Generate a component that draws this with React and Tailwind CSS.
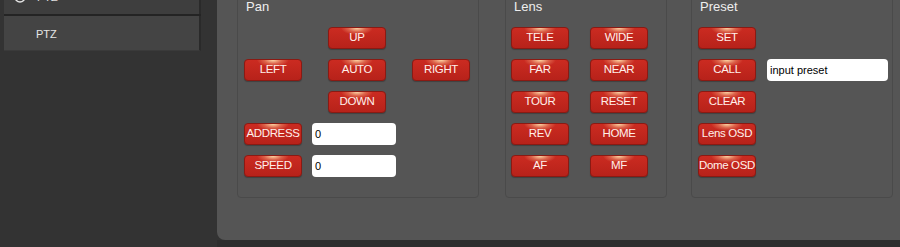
import React from "react";

const btnCls =
  "w-[58px] h-[22px] shrink-0 rounded-[4px] border border-[#8a1a13] text-[11.5px] tracking-[-0.35px] text-[#fff0ea] leading-none flex items-center justify-center bg-[#c2261d] bg-[image:radial-gradient(ellipse_16px_7px_at_50%_0%,rgba(255,222,170,0.95)_0%,rgba(255,200,150,0.35)_55%,rgba(255,200,150,0)_100%),linear-gradient(#cb2b21,#b7221a)] shadow-[0_1px_1px_rgba(0,0,0,0.25)]";

function Btn({ children, className = "" }) {
  return <div className={btnCls + " " + className}>{children}</div>;
}

function Input({ value, className = "" }) {
  return (
    <div
      className={
        "h-[22px] bg-white rounded-[4px] text-[11px] text-black flex items-center pl-[3px] " +
        className
      }
    >
      {value}
    </div>
  );
}

function Group({ title, className = "", children }) {
  return (
    <div
      className={
        "border border-[#4a4a4a] rounded-[4px] mt-[-14px] h-[212px] flex flex-col " +
        className
      }
    >
      <div className="text-[13px] leading-[16px] text-[#eeeeee] ml-[8px] mt-[12px] h-[16px]">
        {title}
      </div>
      {children}
    </div>
  );
}

export default function App() {
  return (
    <div
      className="w-[900px] h-[247px] bg-[#333333] flex overflow-hidden"
      style={{ fontFamily: '"Liberation Sans", Arial, sans-serif' }}
    >
      {/* Sidebar */}
      <div className="w-[217px] shrink-0 pl-[4px] pr-[16px] flex flex-col">
        <div className="h-[34px] mt-[-20px] bg-[#3e3e3e] border-r-2 border-[#2a2a2a] flex items-center pl-[10px] gap-[11px]">
          <svg width="12" height="12" viewBox="0 0 12 12">
            <circle cx="6" cy="6" r="5" fill="none" stroke="#e5e5e5" strokeWidth="1.4" />
            <circle cx="6" cy="6" r="2" fill="#e5e5e5" />
          </svg>
          <span className="text-[11px] text-[#e0e0e0]">PTZ</span>
        </div>
        <div className="h-[2px] bg-[#242424]" />
        <div className="h-[35px] bg-[#444444] border-r-2 border-[#2a2a2a] border-b border-b-[#3a3a3a] flex items-center pl-[32px] pt-[3px]">
          <span className="text-[11px] text-[#e6e6e6]">PTZ</span>
        </div>
      </div>

      {/* Main */}
      <div className="flex-1 flex flex-col">
        <div className="h-[240px] bg-[#555555] rounded-bl-[8px] flex pl-[20px] pr-[8px]">
          {/* Pan */}
          <Group title="Pan" className="w-[242px]">
            <div className="flex flex-col gap-[10px] pl-[6px] mt-[12px]">
              <div className="flex gap-[26px]">
                <div className="w-[58px]" />
                <Btn>UP</Btn>
              </div>
              <div className="flex gap-[26px]">
                <Btn>LEFT</Btn>
                <Btn>AUTO</Btn>
                <Btn>RIGHT</Btn>
              </div>
              <div className="flex gap-[26px]">
                <div className="w-[58px]" />
                <Btn>DOWN</Btn>
              </div>
              <div className="flex gap-[10px]">
                <Btn>ADDRESS</Btn>
                <Input value="0" className="w-[84px]" />
              </div>
              <div className="flex gap-[10px]">
                <Btn>SPEED</Btn>
                <Input value="0" className="w-[84px]" />
              </div>
            </div>
          </Group>

          {/* Lens */}
          <Group title="Lens" className="w-[162px] ml-[26px]">
            <div className="grid grid-cols-[58px_58px] gap-x-[21px] gap-y-[10px] pl-[5px] mt-[12px]">
              <Btn>TELE</Btn>
              <Btn>WIDE</Btn>
              <Btn>FAR</Btn>
              <Btn>NEAR</Btn>
              <Btn>TOUR</Btn>
              <Btn>RESET</Btn>
              <Btn>REV</Btn>
              <Btn>HOME</Btn>
              <Btn>AF</Btn>
              <Btn>MF</Btn>
            </div>
          </Group>

          {/* Preset */}
          <Group title="Preset" className="w-[202px] ml-[24px]">
            <div className="flex flex-col gap-[10px] pl-[6px] mt-[12px]">
              <Btn>SET</Btn>
              <div className="flex gap-[11px]">
                <Btn>CALL</Btn>
                <Input value="input preset" className="w-[121px]" />
              </div>
              <Btn>CLEAR</Btn>
              <Btn>Lens OSD</Btn>
              <Btn>Dome OSD</Btn>
            </div>
          </Group>
        </div>
        <div className="flex-1 bg-[#2e2e2e]" />
      </div>
    </div>
  );
}
